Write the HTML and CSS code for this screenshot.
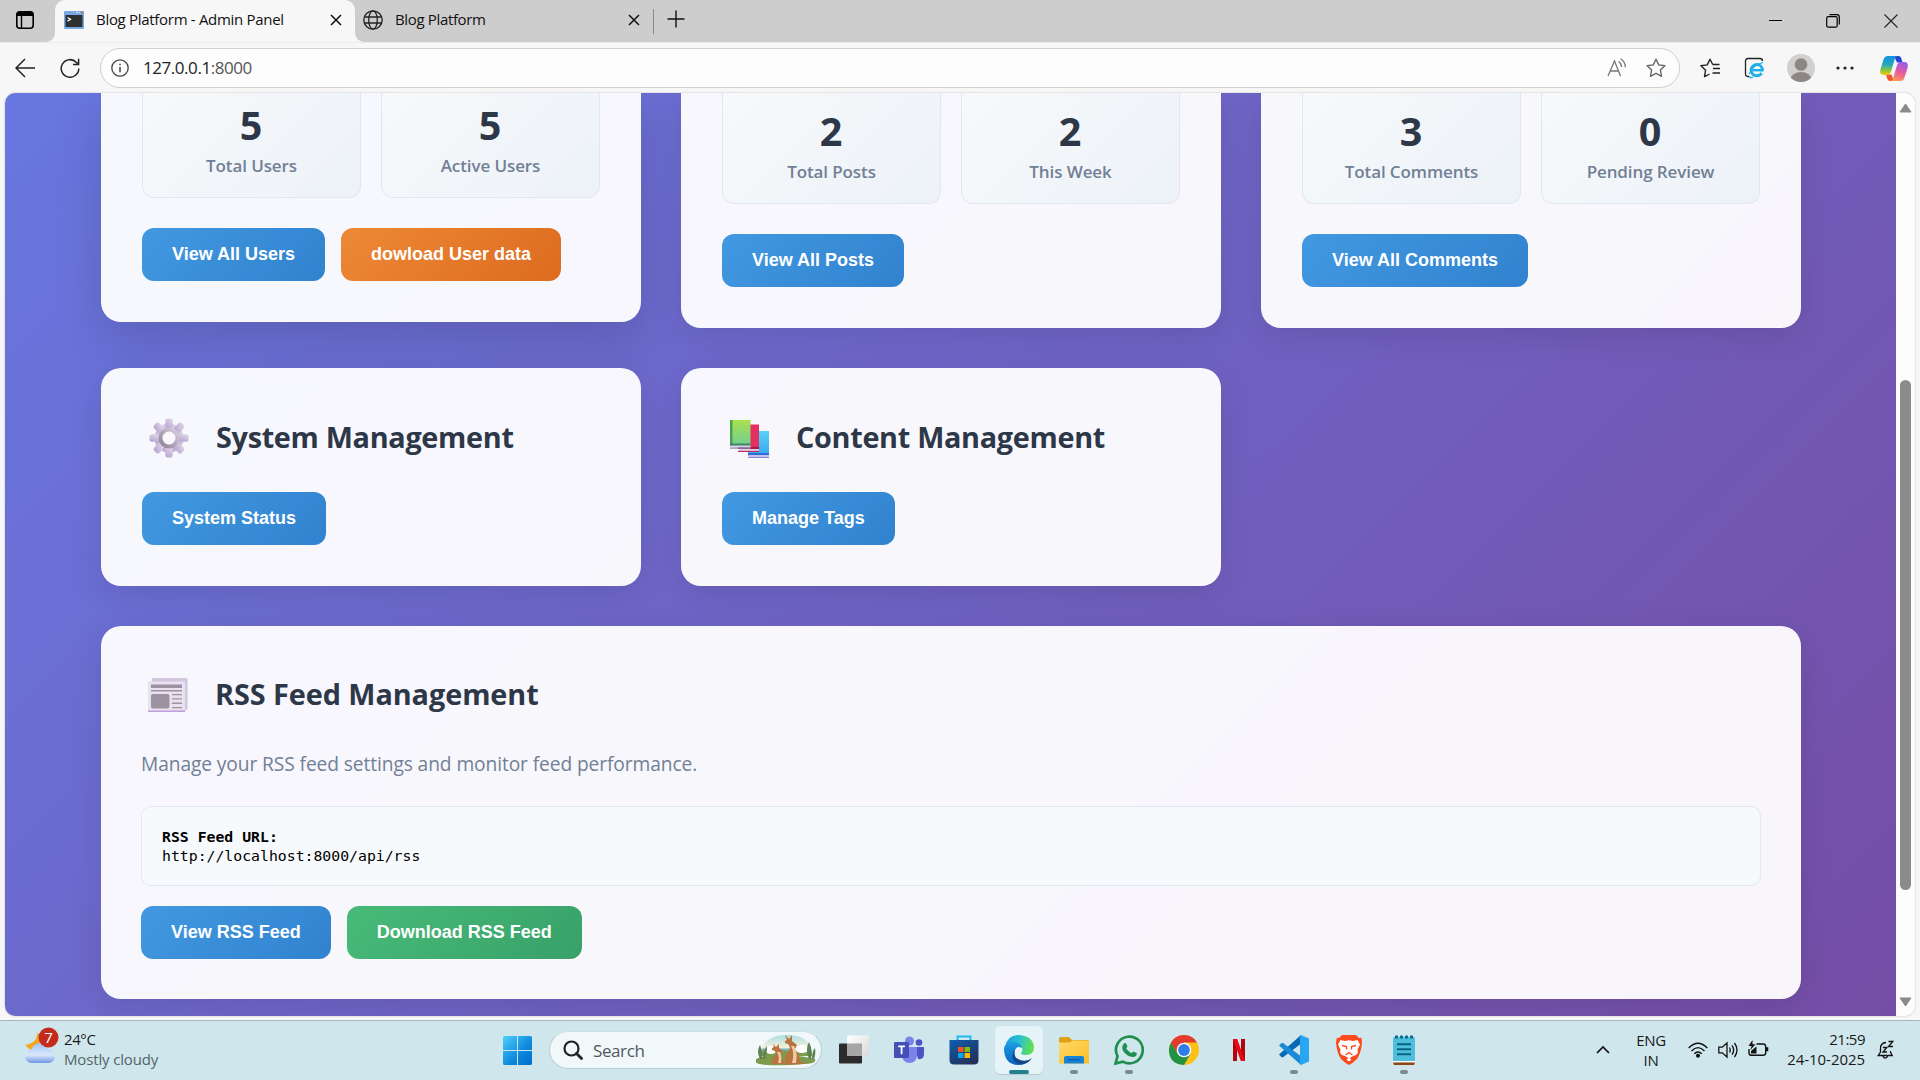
FILE: index.html
```html
<!DOCTYPE html>
<html lang="en">
<head>
<meta charset="utf-8">
<title>Blog Platform - Admin Panel</title>
<link rel="stylesheet" href="styles.css">
</head>
<body>
<div class="desktop">
  <header class="tabstrip">
    <div class="tab-actions">
      <svg width="20" height="20" viewBox="0 0 20 20"><rect x="1.8" y="1.8" width="16.4" height="16.4" rx="3" fill="none" stroke="#000" stroke-width="1.6"/><path d="M2 4.5Q2 2 4.5 2h11Q18 2 18 4.500V6H2z"/><path d="M6.500 6v12" stroke="#000" stroke-width="1.4"/></svg>
    </div>
    <div class="tab tab-active">
      <svg width="20" height="18" viewBox="0 0 20 18"><rect width="20" height="18" rx="1" fill="#79a9e2"/><rect x="1.500" y="4" width="17" height="12" fill="#2d2f31"/><path d="M3.500 6.500l3 1.800-3 1.800" stroke="#fff" stroke-width="1.300" fill="none"/><path d="M12 1.500h2M15 1.500h1" stroke="#d8e8fa"/><path d="M17 1.500h2" stroke="#e25a3f" stroke-width="1.500"/></svg>
      <span class="tab-title t-admin">Blog Platform - Admin Panel</span>
      <svg class="tab-x" width="12" height="12" viewBox="0 0 12 12"><path d="M1 1l10 10M11 1L1 11" stroke="#111" stroke-width="1.500"/></svg>
    </div>
    <div class="tab tab-idle">
      <svg width="20" height="20" viewBox="0 0 20 20" fill="none" stroke="#222" stroke-width="1.300"><circle cx="10" cy="10" r="9.200"/><ellipse cx="10" cy="10" rx="4.300" ry="9.200"/><path d="M1.500 7h17M1.500 13h17"/></svg>
      <span class="tab-title t-blog">Blog Platform</span>
      <svg class="tab-x" width="12" height="12" viewBox="0 0 12 12"><path d="M1 1l10 10M11 1L1 11" stroke="#111" stroke-width="1.500"/></svg>
    </div>
    <div class="tab-sep"></div>
    <svg class="tab-new" width="18" height="18" viewBox="0 0 18 18"><path d="M9 0.500v17M.5 9h17" stroke="#111" stroke-width="1.400"/></svg>
    <div class="window-controls">
      <svg width="13" height="14" viewBox="0 0 13 14"><path d="M0 6.500h13" stroke="#000"/></svg>
      <svg width="14" height="14" viewBox="0 0 14 14" fill="none" stroke="#000" stroke-width="1.200"><rect x=".7" y="2.700" width="10.500" height="10.500" rx="1.500"/><path d="M3.500.7H11Q13.300.7 13.300 3v7.500"/></svg>
      <svg width="14" height="14" viewBox="0 0 14 14"><path d="M.5.5l13 13M13.500.5l-13 13" stroke="#222" stroke-width="1.100"/></svg>
    </div>
  </header>

  <div class="toolbar">
    <svg class="nav-back" width="20" height="20" viewBox="0 0 20 20" fill="none" stroke="#222" stroke-width="1.500"><path d="M20 10H1.200M10 1L1 10l9 9"/></svg>
    <svg class="nav-reload" width="20" height="20" viewBox="0 0 20 20" fill="none" stroke="#222" stroke-width="1.500"><path d="M18.800 10.500A8.800 8.800 0 1 1 16.500 4.500L18.500 6.300M18.600.8v5.600h-5.600"/></svg>
    <div class="address">
      <svg width="18" height="18" viewBox="0 0 18 18" fill="none" stroke="#444" stroke-width="1.300"><circle cx="9" cy="9" r="8.200"/><path d="M9 8v5.200M9 4.700v1.600" stroke-width="1.500"/></svg>
      <span class="url">127.0.0.1<span class="port">:8000</span></span>
      <svg class="read-aloud" width="20" height="20" viewBox="0 0 20 20" fill="none" stroke="#777" stroke-width="1.300"><path d="M1 18L7.500 3l6 15M3 13h8.800M11.500 3.500q3 2 3 5.500M13.500.8q5 3.200 4.800 8.500"/></svg>
      <svg class="star" width="20" height="20" viewBox="0 0 20 20" fill="none" stroke="#666" stroke-width="1.400" stroke-linejoin="round"><path d="M10 1.200l2.700 5.700 6.200.8-4.500 4.300 1.100 6.300L10 15.300l-5.500 3 1.100-6.300L1.100 7.700l6.200-.8z"/></svg>
    </div>
    <div class="toolbar-icons">
      <svg width="20" height="20" viewBox="0 0 20 20" fill="none" stroke="#222" stroke-width="1.400" stroke-linejoin="round"><path d="M9.500 16L4.500 18.600l1.100-6.400L.9 7.800l6.300-.9L10 1.200l2.600 5M12.500 6.500h7M13 10.500h7M12.500 15h7.500"/></svg>
      <svg class="ie-mode" width="22" height="22" viewBox="0 0 22 22" fill="none"><path d="M5 19.500H4q-2.500 0-2.500-2.500V4q0-2.500 2.500-2.500h12Q18.500 1.500 18.500 4" stroke="#222" stroke-width="1.300"/><circle cx="12.800" cy="13.200" r="5.600" stroke="#1caee8" stroke-width="3"/><path d="M9 13.200h10" stroke="#1caee8" stroke-width="2.400"/><path d="M17 15.500h4" stroke="#f7f7f7" stroke-width="2"/><path d="M6 19q-1 3 3 1M5.500 17Q7 9 19 5.500" stroke="#1caee8" stroke-width="1.300"/></svg>
      <svg class="avatar" width="28" height="28" viewBox="0 0 28 28"><defs><clipPath id="avatar"><circle cx="14" cy="14" r="14"/></clipPath></defs><g clip-path="url(#avatar)"><rect width="28" height="28" fill="#d2d0cd"/><circle cx="14" cy="10.500" r="6.300" fill="#8c8784"/><ellipse cx="14" cy="25.500" rx="10.500" ry="7.500" fill="#8c8784"/></g></svg>
      <svg class="more" width="18" height="4" viewBox="0 0 18 4" fill="#222"><circle cx="2" cy="2" r="1.600"/><circle cx="9" cy="2" r="1.600"/><circle cx="16" cy="2" r="1.600"/></svg>
      <svg class="copilot" width="28" height="27" viewBox="0 0 28 27"><defs><linearGradient id="cpA" x1="0" y1="0" x2="0" y2="1"><stop offset="0" stop-color="#1690e0"/><stop offset=".45" stop-color="#24a8c0"/><stop offset=".75" stop-color="#8bc540"/><stop offset="1" stop-color="#ffc800"/></linearGradient><linearGradient id="cpB" x1=".6" y1="0" x2=".3" y2="1"><stop offset="0" stop-color="#9a5cf0"/><stop offset=".5" stop-color="#e85aa0"/><stop offset="1" stop-color="#ff9a50"/></linearGradient></defs><path d="M14 1h4.500q2 0 2.700 2l1.300 4.500h-5.500z" fill="#2544d0"/><path d="M14 26H10q-2 0-2.700-2L6 19.500h5.500z" fill="#f0542c"/><path d="M8 1h9.500q-2 .5-2.700 3l-3.700 12.500Q10 20 6.500 20h-3Q-.8 19.500.4 14.500L3.500 4.500Q4.500 1 8 1z" fill="url(#cpA)"/><path d="M20 26H10.500q2-.5 2.700-3l3.700-12.500Q18 7 21.500 7h3q4.300.5 3.100 5.500l-3.100 10Q23.500 26 20 26z" fill="url(#cpB)"/></svg>
    </div>
  </div>

  <div class="viewport">
    <main class="page">
      <section class="card card-cut card-hover">
        <div class="stats">
          <div class="stat"><div class="stat-num">5</div><div class="stat-label">Total Users</div></div>
          <div class="stat"><div class="stat-num">5</div><div class="stat-label">Active Users</div></div>
        </div>
        <div class="actions"><button class="btn blue">View All Users</button><button class="btn orange">dowload User data</button></div>
      </section>
      <section class="card card-cut">
        <div class="stats">
          <div class="stat"><div class="stat-num">2</div><div class="stat-label">Total Posts</div></div>
          <div class="stat"><div class="stat-num">2</div><div class="stat-label">This Week</div></div>
        </div>
        <div class="actions"><button class="btn blue">View All Posts</button></div>
      </section>
      <section class="card card-cut">
        <div class="stats">
          <div class="stat"><div class="stat-num">3</div><div class="stat-label">Total Comments</div></div>
          <div class="stat"><div class="stat-num">0</div><div class="stat-label">Pending Review</div></div>
        </div>
        <div class="actions"><button class="btn blue">View All Comments</button></div>
      </section>

      <section class="card card-mid">
        <div class="card-head">
          <svg class="head-icon" width="40" height="40" viewBox="0 0 40 40"><defs><linearGradient id="gearA" x1=".7" y1="0" x2=".3" y2="1"><stop offset="0" stop-color="#dcd5e6"/><stop offset="1" stop-color="#baa6d2"/></linearGradient><linearGradient id="gearB" x1="1" y1="0" x2="0" y2="1"><stop offset="0" stop-color="#d8cfe0"/><stop offset="1" stop-color="#8e8396"/></linearGradient></defs><g fill="url(#gearA)"><circle cx="20" cy="20" r="14.500"/><g><rect x="16.300" y="0.500" width="7.400" height="10" rx="2.500"/><rect x="16.300" y="29.500" width="7.400" height="10" rx="2.500"/><rect x=".5" y="16.300" width="10" height="7.400" rx="2.500"/><rect x="29.500" y="16.300" width="10" height="7.400" rx="2.500"/></g><g transform="rotate(45 20 20)"><rect x="16.300" y="0.500" width="7.400" height="10" rx="2.500"/><rect x="16.300" y="29.500" width="7.400" height="10" rx="2.500"/><rect x=".5" y="16.300" width="10" height="7.400" rx="2.500"/><rect x="29.500" y="16.300" width="10" height="7.400" rx="2.500"/></g></g><circle cx="20" cy="20" r="8.500" fill="#f8f8fd" stroke="url(#gearB)" stroke-width="4"/></svg>
          <h3>System Management</h3>
        </div>
        <div class="actions"><button class="btn blue">System Status</button></div>
      </section>
      <section class="card card-mid">
        <div class="card-head">
          <svg class="head-icon" width="40" height="40" viewBox="0 0 40 40"><defs><linearGradient id="bkG" x1="0" y1="0" x2="0" y2="1"><stop offset="0" stop-color="#a8e04e"/><stop offset="1" stop-color="#72cf92"/></linearGradient><linearGradient id="bkB" x1="0" y1="0" x2="0" y2="1"><stop offset="0" stop-color="#5ad2f6"/><stop offset="1" stop-color="#38a9ee"/></linearGradient></defs><g transform="translate(1 0)"><path d="M18 13h21v24H18z" fill="url(#bkB)"/><path d="M18 35h21v2.500H18z" fill="#2c6fd0"/><path d="M19 37h20v2H19z" fill="#c9c0ee"/><path d="M18 39h21v1.200H18z" fill="#7a8fd8"/><path d="M9 6.500h20v24H9z" fill="#e3305f"/><path d="M8 29h21v2H8z" fill="#a8174c"/><path d="M9 31h20v2H9z" fill="#e5d0ea"/><path d="M8 32.800h21v1.200H8z" fill="#c22b64"/><path d="M0 2h20.500v25H0z" fill="url(#bkG)"/><path d="M0 2h2.500v25H0z" fill="#4ba04e"/><path d="M0 25.500h20.500V28H0z" fill="#3c8660"/><path d="M1 27.500h19.500v2H1z" fill="#d8d0ee"/><path d="M0 29.500h20.500v1.200H0z" fill="#7f8ca6"/></g></svg>
          <h3>Content Management</h3>
        </div>
        <div class="actions"><button class="btn blue">Manage Tags</button></div>
      </section>

      <section class="card-wide">
        <div class="card-head">
          <svg class="head-icon" width="40" height="40" viewBox="0 0 40 40"><path d="M4 3h34q1.500 0 1.500 1.500V34L36 36.500 4 34z" fill="#d2c6de"/><path d="M0 6.500h37V35.500H0z" fill="#e9e1f0"/><path d="M0 35.500h37V37H0z" fill="#bf9fdc"/><g fill="#9b92a2"><rect x="3" y="9.500" width="31" height="3.500"/><rect x="3" y="15" width="31" height="1.500"/><rect x="3" y="19" width="18.500" height="14.500" rx="2"/><path d="M24 19h10v1.300H24zM24 23.300h10v1.300H24zM24 27.600h10v1.300H24zM24 32h10v1.300H24z"/></g></svg>
          <h3 class="t-rss">RSS Feed Management</h3>
        </div>
        <p class="desc">Manage your RSS feed settings and monitor feed performance.</p>
        <div class="feed-box"><strong>RSS Feed URL:</strong><br>http://localhost:8000/api/rss</div>
        <div class="actions"><button class="btn blue">View RSS Feed</button><button class="btn green">Download RSS Feed</button></div>
      </section>
    </main>
    <div class="scrollbar">
      <svg width="13" height="10" viewBox="0 0 13 10"><path d="M6.500 1L12 9H1z" fill="#8b8b8b" stroke="#8b8b8b" stroke-linejoin="round"/></svg>
      <div class="thumb"></div>
      <svg width="13" height="10" viewBox="0 0 13 10"><path d="M6.500 9L12 1H1z" fill="#8b8b8b" stroke="#8b8b8b" stroke-linejoin="round"/></svg>
    </div>
  </div>

  <footer class="taskbar">
    <div class="weather">
      <svg width="36" height="38" viewBox="0 0 36 38"><defs><linearGradient id="cl" gradientUnits="userSpaceOnUse" x1="0" y1="16" x2="0" y2="36"><stop offset="0" stop-color="#9cc2f4"/><stop offset=".6" stop-color="#dbe7fb"/><stop offset="1" stop-color="#6b96e6"/></linearGradient></defs><path d="M13 6q1 9-11.500 12 4 7 12 5 7-3 5-13z" fill="#f5a623"/><g fill="url(#cl)"><circle cx="16" cy="25" r="9"/><rect x="1" y="22.500" width="30" height="13.500" rx="6.750"/></g><circle cx="24.500" cy="10.500" r="10" fill="#c42b1c"/><text x="24.500" y="15.800" text-anchor="middle" class="badge-text">7</text></svg>
      <div class="weather-text"><span class="w1">24°C</span><span class="w2">Mostly cloudy</span></div>
    </div>
    <div class="dock">
      <svg class="start" width="30" height="30" viewBox="0 0 30 30"><defs><linearGradient id="win" x1="0" y1="0" x2="1" y2="1"><stop offset="0" stop-color="#4fd0fb"/><stop offset=".6" stop-color="#0d86dc"/><stop offset="1" stop-color="#0070cc"/></linearGradient></defs><path d="M1.500 0H14v14H0V1.500Q0 0 1.500 0zM15 0h12.500Q29 0 29 1.500V14H15zM0 15h14v14H1.500Q0 29 0 27.500zM15 15h14v12.500Q29 29 27.500 29H15z" fill="url(#win)"/></svg>
      <div class="search">
        <svg width="20" height="20" viewBox="0 0 20 20" fill="none" stroke="#222" stroke-width="2.200"><circle cx="8.500" cy="8.500" r="7"/><path d="M13.500 13.500l5 5" stroke-width="2.800" stroke-linecap="round"/></svg>
        <span class="search-text">Search</span>
        <svg class="roos" width="60" height="32" viewBox="0 0 60 32"><defs><linearGradient id="sky" x1="0" y1="0" x2="0" y2="1"><stop offset="0" stop-color="#a9e0e2"/><stop offset=".6" stop-color="#f6efdc"/><stop offset=".68" stop-color="#7fb5cf"/><stop offset=".8" stop-color="#7c9c4a"/></linearGradient></defs><path d="M4 22Q6 1 31 1t25 21z" fill="url(#sky)"/><ellipse cx="15" cy="16" rx="6" ry="4" fill="#fff"/><ellipse cx="46" cy="15" rx="7" ry="4" fill="#fff"/><path d="M0 25q12-5 30-4t29 4q2 5-12 5-20 2-36 1T0 25z" fill="#7f9a4c"/><path d="M4 25Q0 17 4 11q3 7 2 14M7 25q0-9 4-13 0 8-2 13M53 25q-4-10 0-17 4 7 2 17M56 25q0-8 3-11 1 7-1 11" fill="#5f8350"/><path d="M29 29q-1-7 4-12 2-4-1-7l-3-1 0-2 2-1-2-5 4 4 3-4 0 6 5 4-2 4q1 3 3 5 3 5 1 8l9 1.500-11 1H29z" fill="#b9733f"/><path d="M35 12q4 6 1 17h4q2-10-2-17" fill="#eccba5"/><path d="M16 30q-1-6 4-9l-1-4-3-1 0-2 2-1-1-3 3 3 3-3 0 4 4 3-2 3q1 4 2 7l1 3z" fill="#b9733f"/><path d="M21 18q3 5 1 11h3q1-7-1-11" fill="#eccba5"/></svg>
      </div>
      <div class="app"><svg width="30" height="30" viewBox="0 0 30 30"><defs><linearGradient id="tv" x1="0" y1="0" x2="1" y2="1"><stop offset="0" stop-color="#fff"/><stop offset="1" stop-color="#d9d9d9"/></linearGradient></defs><rect x="0" y="8.500" width="23" height="20" rx="1" fill="#2b2b2b"/><rect x="8" y="0.500" width="22" height="20.500" rx="1" fill="url(#tv)"/><rect x="8" y="8.500" width="15" height="12.500" fill="#a6a6a6"/></svg></div>
      <div class="app"><svg width="30" height="30" viewBox="0 0 30 30"><circle cx="25" cy="7.500" r="3.300" fill="#4f52c4"/><path d="M21 12h9v7q0 6-6 5z" fill="#4f52c4"/><circle cx="15.500" cy="6" r="4.500" fill="#7b83eb"/><path d="M8 12h15v9q-1 7-7.500 7T8 21z" fill="#7b83eb"/><rect x="0" y="7" width="15" height="16" rx="1" fill="#464eb8"/><path d="M4.300 11.300h6.600M7.600 11.300v8" stroke="#fff" stroke-width="1.800"/></svg></div>
      <div class="app"><svg width="30" height="30" viewBox="0 0 30 30"><defs><linearGradient id="st" x1="0" y1="0" x2=".7" y2="1"><stop offset="0" stop-color="#0d5fb0"/><stop offset="1" stop-color="#243058"/></linearGradient></defs><path d="M8.500 6V1.500h13V6" fill="none" stroke="#1cb9ee" stroke-width="2"/><path d="M.5 5h29v20q0 4.500-4.500 4.500H5Q.5 29.500.5 25z" fill="url(#st)"/><path d="M9 12h5.500v5H9z" fill="#f35325"/><path d="M15.500 12H21v5h-5.500z" fill="#81bc06"/><path d="M9 18h5.500v5H9z" fill="#05a6f0"/><path d="M15.500 18H21v5h-5.500z" fill="#ffba08"/></svg></div>
      <div class="app app-current"><svg width="30" height="30" viewBox="0 0 30 30"><defs><linearGradient id="edA" x1="0" y1=".2" x2="1" y2=".4"><stop offset="0" stop-color="#1b9de2"/><stop offset=".5" stop-color="#2cc3cf"/><stop offset="1" stop-color="#62e04e"/></linearGradient><linearGradient id="edB" x1="0" y1="0" x2="0" y2="1"><stop offset="0" stop-color="#1b9fe4"/><stop offset="1" stop-color="#0b62c4"/></linearGradient></defs><path d="M1 12Q3 0 15 0q14 1 15 12 0 8-8 8-5 0-5-2 2-2 1-5-2-5-8-5-6 0-9 4z" fill="url(#edA)"/><path d="M0 15q0-8 9-8 8 0 9 6-5-3-7 2-2 8 5 12 4 2 6 1-3 2-7 2Q1 30 0 15z" fill="url(#edB)"/><path d="M11 14q-3 8 5 11 7 2 12-2-4 6-11 6.500-8-1-8.500-8 0-5 2.500-7.500z" fill="#114a8b"/></svg></div>
      <div class="app app-open"><svg width="30" height="30" viewBox="0 0 30 30"><defs><linearGradient id="fo" x1="0" y1="0" x2="1" y2="1"><stop offset="0" stop-color="#ffd96b"/><stop offset="1" stop-color="#fbbf24"/></linearGradient></defs><path d="M0 3.500Q0 2 1.500 2H10l3 3h17v4H0z" fill="#dda112"/><path d="M0 7.500h11l2.500-2H30V28.500H0z" fill="url(#fo)"/><path d="M5 28.500V23q0-2 2-2h16q2 0 2 2v5.500z" fill="#1484d6"/><path d="M8.500 24.700h13" stroke="#0b5ba6" stroke-width="1.300"/></svg></div>
      <div class="app app-open"><svg width="30" height="30" viewBox="0 0 30 30"><path d="M1.500 28.500l2-7.300A13.400 13.400 0 1 1 8.700 26.600z" fill="none" stroke="#1f8e50" stroke-width="2.700"/><path d="M10.500 8q1.300-.4 1.800.8l1.200 2.700-1.300 2q2 3.400 5.400 4.700l1.700-1.800 3.400 1.700q.5 4-4 4-6-.4-9.500-6Q6.800 11 10.500 8z" fill="#1f8e50"/></svg></div>
      <div class="app"><svg width="30" height="30" viewBox="0 0 30 30"><circle cx="15" cy="15" r="15" fill="#fbc116"/><path d="M2 7.500Q6 0 15 0t13 7.500H15l-6.500 11z" fill="#e33b2e"/><path d="M2 7.500l6.500 11L15 22.500 15 30Q0 29 0 15 0 11 2 7.500z" fill="#229342"/><path d="M15 30l6.500-11.200L8.500 18.800z" fill="#229342"/><circle cx="15" cy="15" r="7.300" fill="#fff"/><circle cx="15" cy="15" r="5.900" fill="#2f7de9"/></svg></div>
      <div class="app"><svg width="30" height="30" viewBox="0 0 30 30"><path d="M9 4h4v22H9zM17 4h4v22h-4z" fill="#b1060f"/><path d="M9 4h4.200L21 26h-4.200z" fill="#e50914"/></svg></div>
      <div class="app app-open"><svg width="30" height="30" viewBox="0 0 30 30"><path d="M22 0L0 19.500l2.500 2.700h1.500L23 8z" fill="#0a69b4"/><path d="M22 30L0 10.500 2.500 8H4l19 14z" fill="#1a8ad6"/><path d="M22 0l8 3.500v23L22 30q-1.500-.5-1-2V2q0-1.500 1-2z" fill="#29a6f2"/></svg></div>
      <div class="app"><svg width="30" height="30" viewBox="0 0 30 30"><path d="M8 0h14l3 3 2.500-.3L28 8q-1 10-5 16-4 4-8 6-4-2-8-6Q3 18 2 8l.8-5.300L5 3z" fill="#fb4a1b"/><path d="M6.500 5l4.500 1 4-.7 4 .7 4.500-1 2.500 4.500-2.500 5q1 4-1.500 5.500l-4 1.500-3 2.500-3-2.500-4-1.500Q5.500 18.500 6.500 14.500L4 9.500z" fill="#fff"/><path d="M8 10.500l4.500 1v3M22 10.500l-4.500 1v3M11.500 20l3.500-2.500 3.500 2.500" fill="none" stroke="#fb4a1b" stroke-width="1.300"/><path d="M12.500 24.500l2.500-1.500 2.500 1.500-2.500 2z" fill="#fff"/></svg></div>
      <div class="app app-open"><svg width="30" height="30" viewBox="0 0 30 30"><rect x="4" y="2" width="22" height="24.500" rx="1.500" fill="#4dbfdd"/><g stroke="#08637f" stroke-width="1.900"><path d="M8 9.200h14M8 14.200h14M8 19.200h14"/></g><g fill="#0b6a88"><circle cx="7.500" cy="2" r="1.700"/><circle cx="12.500" cy="2" r="1.700"/><circle cx="17.500" cy="2" r="1.700"/><circle cx="22.500" cy="2" r="1.700"/></g><path d="M4 26h22v1.300H4z" fill="#fff"/><path d="M4 27.500h22L25 30H5z" fill="#8f4514"/></svg></div>
    </div>
    <div class="tray">
      <svg class="chev" width="14" height="9" viewBox="0 0 14 9"><path d="M1 8l6-6 6 6" fill="none" stroke="#111" stroke-width="1.700"/></svg>
      <div class="lang"><span>ENG</span><span>IN</span></div>
      <svg class="wifi" width="20" height="16" viewBox="0 0 20 16" fill="none" stroke="#111" stroke-width="1.400"><path d="M.7 6q9.300-9.500 18.600 0M3.500 9Q10 2.300 16.500 9M6.300 11.800q3.700-3.700 7.400 0"/><circle cx="10" cy="13.800" r="1.300" fill="#111"/></svg>
      <svg class="vol" width="20" height="18" viewBox="0 0 20 18" fill="none" stroke="#111" stroke-width="1.300"><path d="M.8 6.200h3.500L9 2v14l-4.700-4.200H.8zM11.500 6.500q1.500 2.500 0 5M14 4.300q3.300 4.700 0 9.400M16.500 2q5 7 0 14"/></svg>
      <svg class="bat" width="21" height="18" viewBox="0 0 21 18"><path d="M8.500 4H15q2.700 0 2.700 2.700v6Q17.700 15.300 15 15.300H3.700Q1 15.300 1 12.700V9" fill="none" stroke="#111" stroke-width="1.400"/><path d="M18 7.300h2.300v4H18zM3 13.500V11l5.500-4.500v7zM4.500 0l-4 6h3L2.500 10l5-5.800H4.500z" fill="#111"/></svg>
      <div class="clock"><span>21:59</span><span class="date">24-10-2025</span></div>
      <svg class="bell" width="18" height="20" viewBox="0 0 18 20" fill="none" stroke="#111" stroke-width="1.300"><path d="M9 2.500Q3.500 3 3.500 8.500V12L1.200 15.500h14L13.500 12v-1M6 16q.5 2.200 2.200 2.200T10.500 16M6 7.500h3.800L6 12h4M11.500 1.500h4.300L11.500 6.500h4.500"/></svg>
    </div>
  </footer>
</div>
</body>
</html>
```
FILE: styles.css
```css
* { box-sizing: border-box; }
body { margin: 0; overflow: hidden; font-family: "Open Sans", "Noto Sans", sans-serif; }
svg { display: block; flex: none; }
span { white-space: nowrap; }
.desktop { width: 1920px; height: 1080px; display: flex; flex-direction: column; background: #f7f7f7; }

/* Browser tabs */
.tabstrip { height: 42px; flex: none; background: linear-gradient(#cdcdcd, #cdcdcd) no-repeat 0 0 / 100% 30px, linear-gradient(90deg, #f7f7f7 400px, #cdcdcd 400px); display: flex; align-items: stretch; }
.tab-actions { width: 55px; height: 42px; padding: 10px 0 0 15px; background: #cdcdcd; border-bottom-right-radius: 9px; }
.tab { height: 42px; display: flex; align-items: center; font-size: 15px; color: #111; padding-bottom: 2px; }
.tab-active { width: 300px; padding-left: 9px; background: #f7f7f7; border-radius: 10px 10px 0 0; }
.tab-idle { width: 298px; padding-left: 8px; background: #cdcdcd; border-bottom-left-radius: 9px; }
.tab-title { margin-left: 12px; flex: 1; line-height: 20px; padding-bottom: 2px; }
.t-admin { letter-spacing: -0.3px; }
.t-blog { letter-spacing: -0.350px; }
.tab-x { margin-right: 13px; }
.tab-sep { width: 1px; height: 25px; margin-top: 9px; background: #888; }
.tab-new { margin: 10px 0 0 13px; }
.window-controls { margin-left: auto; margin-right: 22px; display: flex; align-items: center; gap: 44px; }

/* Toolbar */
.toolbar { height: 51px; flex: none; display: flex; align-items: center; background: #f7f7f7; border-top: 1px solid #ececec; }
.nav-back { margin-left: 15px; }
.nav-reload { margin-left: 25px; }
.address { margin-left: 20px; width: 1580px; height: 40px; border: 1px solid #cfcfcf; border-radius: 20px; background: #fdfdfd; display: flex; align-items: center; padding: 0 13px 0 10px; }
.url { flex: 1; margin-left: 14px; padding-bottom: 2px; font-size: 17px; letter-spacing: -0.450px; color: #222; }
.port { color: #555; }
.star { margin-left: 19px; }
.toolbar-icons { margin-left: 20px; display: flex; align-items: center; }
.ie-mode { margin-left: 24px; }
.avatar { margin-left: 21px; }
.more { margin-left: 21px; }
.copilot { margin-left: 26px; }

/* Page area */
.viewport { height: 923px; width: 1910px; margin-left: 5px; flex: none; display: flex; border-radius: 10px; overflow: hidden; background: #fdfdfd; box-shadow: 0 0 2px rgba(0,0,0,.25); }
.page { width: 1891px; height: 923px; overflow: hidden; padding: 0 95px 0 96px; display: grid; grid-template-columns: repeat(3, 540px); grid-template-rows: 235px 218px 373px; gap: 40px; align-items: start;
  background: linear-gradient(135deg, #667eea 0%, #764ba2 100%) 0 -480px / 1891px 1560px no-repeat; }
.card { border: 1px solid rgba(255,255,255,.2); border-radius: 20px; background: rgba(255,255,255,.95); padding: 0 40px 40px; box-shadow: 0 8px 32px rgba(0,0,0,.1); }
.card-cut { height: 235px; border-top: 0; border-radius: 0 0 20px 20px; }
.card-hover { height: 229px; box-shadow: 0 16px 48px rgba(0,0,0,.15); }
.card-mid { height: 218px; padding-top: 40px; }
.card-wide { grid-column: 1 / -1; height: 373px; border-radius: 20px; background: rgba(255,255,255,.95); padding: 40px; box-shadow: 0 8px 32px rgba(0,0,0,.1); }

.stats { display: grid; grid-template-columns: 219px 219px; gap: 20px; margin-bottom: 30px; }
.stat { height: 111px; border: 1px solid #e2e8f0; border-top: 0; border-radius: 0 0 12px 12px; background: linear-gradient(135deg, #f7fafc, #edf2f7) 0 100% / 100% 134px; text-align: center; padding-top: 11px; }
.card-hover .stat { height: 105px; padding-top: 5px; }
.stat-num { font-size: 39.500px; line-height: 54px; font-weight: 700; color: #2d3748; padding-right: 1px; }
.stat-label { font-size: 17px; line-height: 24px; margin-top: 2px; font-weight: 600; color: #718096; letter-spacing: -0.100px; }

.actions { display: flex; gap: 16px; }
.btn { height: 53px; padding: 0 30px; border: 0; border-radius: 12px; color: #fff; font: bold 18px "Liberation Sans", Arial, sans-serif; white-space: nowrap; }
.blue { background: linear-gradient(135deg, #4299e1, #3182ce); }
.orange { background: linear-gradient(135deg, #ed8936, #dd6b20); }
.green { background: linear-gradient(135deg, #48bb78, #38a169); }

.card-head { display: flex; align-items: center; height: 58px; margin-bottom: 25px; padding-left: 7px; }
.card-head h3 { margin: 0 0 2px 27px; font-size: 28.800px; line-height: 40px; font-weight: 700; color: #2d3748; white-space: nowrap; letter-spacing: -0.300px; }
.card-head .t-rss { letter-spacing: -0.050px; }
.desc { margin: 0; font-size: 19.200px; line-height: 30px; color: #718096; letter-spacing: -0.100px; }
.feed-box { height: 80px; margin: 27px 0 20px; padding: 20px; border: 1px solid #e2e8f0; border-radius: 10px; background: #f7fafc; font: 14.800px/19px "DejaVu Sans Mono", monospace; color: #000; }

/* Scrollbar */
.scrollbar { width: 19px; display: flex; flex-direction: column; align-items: center; padding: 10px 0 9px; }
.thumb { width: 11px; height: 510px; margin: 267px 0 auto; border-radius: 6px; background: #8b8b8b; }

/* Taskbar */
.taskbar { height: 60px; margin-top: 4px; flex: none; background: #cfe7ec; border-top: 1px solid #a7b5bd; display: flex; align-items: flex-start; color: #1a1a1a; font-size: 15px; }
.weather { display: flex; width: 503px; padding: 6px 0 0 24px; }
.badge-text { font: 15px "Open Sans", sans-serif; fill: #fff; }
.weather-text { display: flex; flex-direction: column; line-height: 20px; margin-left: 4px; padding-top: 2px; }
.w1 { letter-spacing: -.4px; }
.w2 { color: #55636a; letter-spacing: -.150px; }
.dock { display: flex; }
.start { margin: 15px 16px 0 0; }
.search { width: 273px; height: 38px; margin: 10px 4px 0 0; border-radius: 19px; background: #f0f8fa; border: 1px solid #b9cdd4; border-top-color: #cfdfe4; display: flex; align-items: center; padding: 0 5px 0 13px; }
.search-text { flex: 1; margin-left: 10px; font-size: 17px; color: #50585c; letter-spacing: -.4px; }
.app { width: 55px; height: 59px; padding-top: 14px; display: flex; flex-direction: column; align-items: center; }
.app-current { width: 48px; height: 48px; margin: 5px 3.500px 0; padding-top: 9px; border-radius: 5px; background: #e6f3f7; box-shadow: 0 1px 1px rgba(0,0,0,.12); }
.app-current::after { content: ""; width: 20px; height: 4px; margin-top: 5px; border-radius: 2px; background: #24808f; }
.app-open::after { content: ""; width: 8px; height: 4px; margin-top: 5px; border-radius: 2px; background: #7c8a8f; }
.tray { margin-left: auto; display: flex; padding-right: 25px; }
.chev { margin-top: 24px; }
.lang, .clock { display: flex; flex-direction: column; line-height: 20px; padding-top: 9px; }
.lang { width: 40px; margin-left: 21px; align-items: center; letter-spacing: -.3px; }
.wifi { margin: 21px 0 0 17px; }
.vol { margin: 20px 0 0 10px; }
.bat { margin: 19px 0 0 10px; }
.clock { width: 80px; margin-left: 16px; padding-top: 8px; align-items: flex-end; letter-spacing: -.5px; }
.date { letter-spacing: -.050px; }
.bell { margin: 19px 0 0 12px; }
```
